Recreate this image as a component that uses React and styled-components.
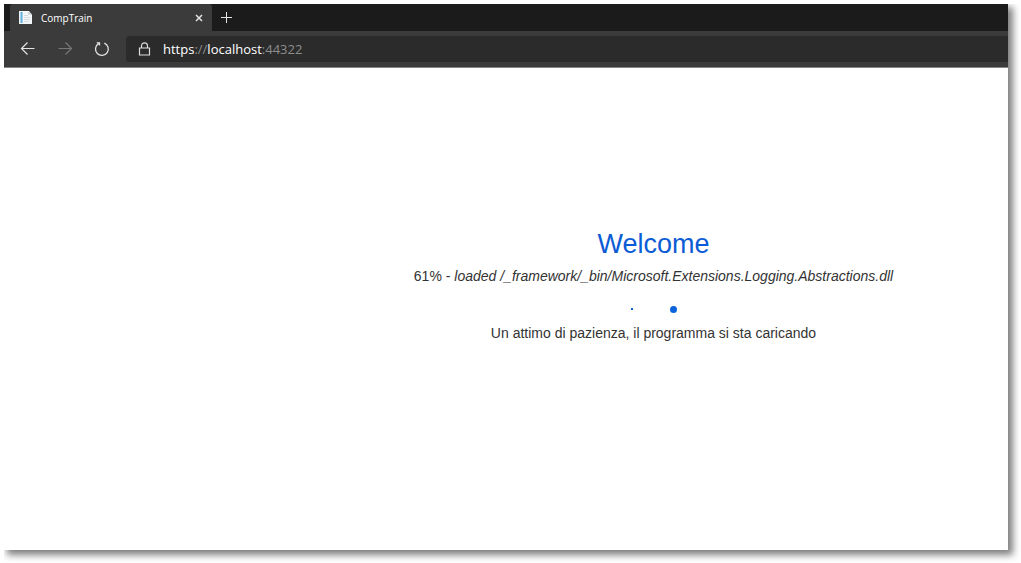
import React from "react";
import styled, { createGlobalStyle } from "styled-components";

const GlobalStyle = createGlobalStyle`
  * { box-sizing: border-box; }
  body { margin: 0; background: #fff; }
  button, input { font: inherit; }
`;

const Frame = styled.div`
  display: flex;
  flex-direction: column;
  min-height: calc(100vh - 17px);
  margin: 4px 13px 13px 4px;
  background: #fff;
  box-shadow: 4px 4px 7px 1px rgba(0, 0, 0, 0.5);
  clip-path: inset(0 -13px -13px 0);
`;

const TabStrip = styled.header`
  display: flex;
  height: 27px;
  padding-left: 6px;
  background: #1b1b1b;
`;

const Tab = styled.div`
  display: flex;
  align-items: center;
  width: 202px;
  padding: 0 8px;
  border-radius: 3px 3px 0 0;
  background: #3b3b3b;
  color: #fff;
  font: 10px/16px "Open Sans", "Noto Sans", sans-serif;
`;

const TabTitle = styled.span`
  flex: 1;
  margin-left: 8px;
`;

const IconButton = styled.button`
  display: flex;
  align-items: center;
  justify-content: center;
  width: ${(p) => p.$size}px;
  height: ${(p) => p.$size}px;
  padding: 0;
  border: 0;
  background: none;
  color: ${(p) => (p.disabled ? "#777" : "#e4e4e4")};
`;

const NewTab = styled(IconButton)`
  margin: 3px 0 0 4px;
`;

const Toolbar = styled.nav`
  display: flex;
  align-items: center;
  height: 37px;
  padding-left: 16px;
  border-bottom: 1px solid #858585;
  background: #3b3b3b;
`;

const NavButtons = styled.div`
  display: flex;
  gap: 21px;
  margin-right: 16px;
`;

const AddressBar = styled.div`
  display: flex;
  flex: 1;
  align-items: center;
  height: 26px;
  padding-left: 12px;
  border-radius: 3px 0 0 3px;
  background: #2b2b2b;
  color: #ddd;
`;

const Url = styled.a`
  margin-left: 11px;
  color: #8d8d8d;
  font: 13px/20px "Open Sans", "Noto Sans", sans-serif;
  text-decoration: none;
`;

const UrlPart = styled.span`
  color: #fff;
`;

const Page = styled.main`
  display: flex;
  flex: 1;
  flex-direction: column;
  align-items: center;
  padding: 160px 0 16px 295px;
  color: #333;
  font: 14px/20px "Liberation Sans", Arial, sans-serif;
  text-align: center;
`;

const Heading = styled.h1`
  margin: 0;
  color: #0b5cd5;
  font-size: 27px;
  font-weight: 400;
  line-height: 32px;
`;

const Message = styled.p`
  margin: 0;
`;

const Status = styled(Message)`
  margin-top: 6px;
`;

const Dots = styled.div`
  display: flex;
  align-items: center;
  justify-content: center;
  gap: 37px;
  height: 8px;
  margin: 19px 0 10px;
`;

const Dot = styled.span`
  width: ${(p) => p.$size}px;
  height: ${(p) => p.$size}px;
  border-radius: ${(p) => (p.$size > 2 ? "50%" : "0")};
  background: #0b63dc;
`;

const Stroke = ({ size, width = 1, children }) => (
  <svg width={size} height={size} viewBox={`0 0 ${size} ${size}`} fill="none" stroke="currentColor" strokeWidth={width} aria-hidden="true">
    {children}
  </svg>
);

const NotebookIcon = () => (
  <svg width="15" height="15" viewBox="0 0 15 15" aria-hidden="true">
    <path d="M1 1h10v13H1z" fill="#eef3f5" />
    <path d="M2.5 2h2v11h-2z" fill="#5fb0e2" />
    <path d="M5 1h6l3 3.5V14H5z" fill="#f3f5f6" />
    <path d="M10.5 1.5v3h3z" fill="#b9c4ca" />
    <path d="M6 5.5h4M6 7.5h6M6 9.5h6M6 11.5h5" stroke="#ccd5da" strokeWidth=".8" />
  </svg>
);

export default function App() {
  return (
    <>
      <GlobalStyle />
      <Frame>
        <TabStrip>
          <Tab>
            <NotebookIcon />
            <TabTitle>CompTrain</TabTitle>
            <IconButton $size={10} aria-label="Close tab">
              <Stroke size={10} width={1.5}><path d="M2 2l6 6M8 2l-6 6" /></Stroke>
            </IconButton>
          </Tab>
          <NewTab $size={20} aria-label="New tab">
            <Stroke size={12}><path d="M6.5 1v11M1 6.5h11" /></Stroke>
          </NewTab>
        </TabStrip>
        <Toolbar>
          <NavButtons>
            <IconButton $size={16} aria-label="Back">
              <Stroke size={16} width={1.2}><path d="M14.5 7.5H1.5M7.5 1.5l-6 6 6 6" /></Stroke>
            </IconButton>
            <IconButton $size={16} aria-label="Forward" disabled>
              <Stroke size={16} width={1.2}><path d="M1.5 7.5h13M8.5 1.5l6 6-6 6" /></Stroke>
            </IconButton>
            <IconButton $size={16} aria-label="Reload">
              <Stroke size={16} width={1.3}>
                <path d="M10.3 2.1A6.4 6.4 0 1 1 4.5 2.6" />
                <path d="M2.2 1.2h3.9v3.9z" fill="currentColor" stroke="none" />
              </Stroke>
            </IconButton>
          </NavButtons>
          <AddressBar>
            <Stroke size={14} width={1.2}>
              <path d="M1.5 6h10v7h-10zM3.5 6V3.8a3 3 0 0 1 6 0V6" />
            </Stroke>
            <Url href="https://localhost:44322">
              <UrlPart>https</UrlPart>://<UrlPart>localhost</UrlPart>:44322
            </Url>
          </AddressBar>
        </Toolbar>
        <Page>
          <Heading>Welcome</Heading>
          <Status>61% - <em>loaded /_framework/_bin/Microsoft.Extensions.Logging.Abstractions.dll</em></Status>
          <Dots role="status" aria-label="Loading">
            <Dot $size={2} />
            <Dot $size={7} />
          </Dots>
          <Message>Un attimo di pazienza, il programma si sta caricando</Message>
        </Page>
      </Frame>
    </>
  );
}
